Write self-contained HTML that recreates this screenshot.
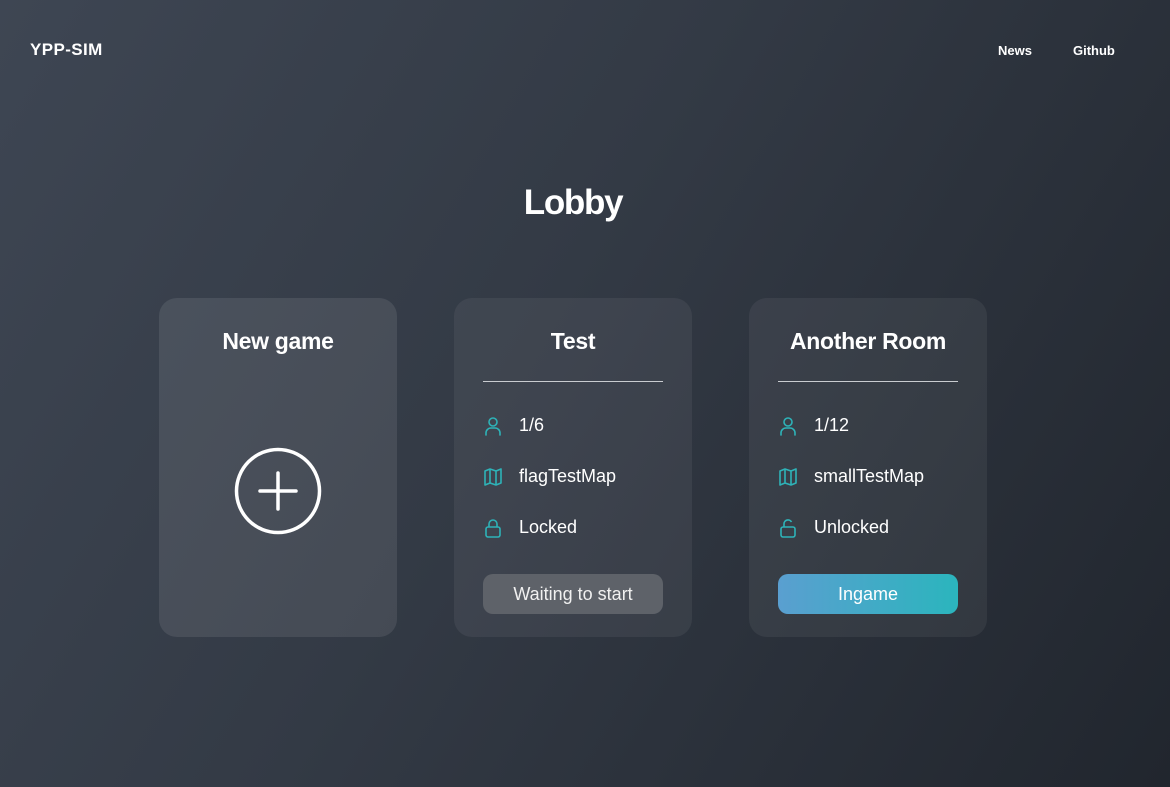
<!DOCTYPE html>
<html><head><style>
html,body{margin:0;width:1170px;height:787px;overflow:hidden}
body{background:linear-gradient(120deg,#3e4653 0%,#333a45 45%,#21262e 100%);font-family:"Liberation Sans",sans-serif;color:#fff;position:relative}
.logo{position:absolute;left:30px;top:40px;font-weight:bold;font-size:17px;letter-spacing:0.4px}
.nav{position:absolute;top:43px;font-weight:bold;font-size:13px}
h1{position:absolute;left:0;width:1146px;text-align:center;top:183px;margin:0;font-size:35px;letter-spacing:-1.3px}
.card{position:absolute;top:298px;width:238px;height:339px;border-radius:18px;background:rgba(255,255,255,0.06)}
.card.new{background:rgba(255,255,255,0.09)}
.title{position:absolute;top:30px;width:100%;text-align:center;font-size:23px;font-weight:bold;letter-spacing:-0.3px}
.hr{position:absolute;left:29px;width:180px;top:83px;border-top:1px solid #c9ccd0}
.row{position:absolute;left:29px;font-size:18px;display:flex;align-items:center}
.row svg{margin-right:16px}
.btn{position:absolute;left:29px;top:276px;width:180px;height:40px;border-radius:10px;text-align:center;line-height:40px;font-size:18px}
</style></head><body>
<div class="logo">YPP-SIM</div>
<div class="nav" style="left:998px">News</div>
<div class="nav" style="left:1073px">Github</div>
<h1>Lobby</h1>
<div class="card new" style="left:159px">
<div class="title">New game</div>
<svg style="position:absolute;left:75px;top:149px" width="88" height="88" viewBox="0 0 88 88" fill="none" stroke="#fff" stroke-width="3.5" stroke-linecap="round"><circle cx="44" cy="44" r="41.5"/><path d="M44 26v36M26 44h36"/></svg>
</div>
<div class="card" style="left:454px">
<div class="title">Test</div><div class="hr"></div>
<div class="row" style="top:117px"><svg width="20" height="20" viewBox="0 0 20 20" fill="none" stroke="#2eb3b8" stroke-width="1.6" stroke-linecap="round"><circle cx="10" cy="6" r="4"/><path d="M3 19v-2a5 5 0 0 1 5-5h4a5 5 0 0 1 5 5v2"/></svg>1/6</div>
<div class="row" style="top:168px"><svg width="20" height="20" viewBox="0 0 20 20" fill="none" stroke="#2eb3b8" stroke-width="1.6" stroke-linejoin="round"><path d="M2 4l5-2 6 2 5-2v14l-5 2-6-2-5 2z M7 2v14 M13 4v14"/></svg>flagTestMap</div>
<div class="row" style="top:219px"><svg width="20" height="20" viewBox="0 0 20 20" fill="none" stroke="#2eb3b8" stroke-width="1.6"><rect x="3" y="9" width="14" height="10" rx="2"/><path d="M6 9V6a4 4 0 0 1 8 0v3"/></svg>Locked</div>
<div class="btn" style="background:#5e6269;color:#f0f0f0">Waiting to start</div>
</div>
<div class="card" style="left:749px">
<div class="title">Another Room</div><div class="hr"></div>
<div class="row" style="top:117px"><svg width="20" height="20" viewBox="0 0 20 20" fill="none" stroke="#2eb3b8" stroke-width="1.6" stroke-linecap="round"><circle cx="10" cy="6" r="4"/><path d="M3 19v-2a5 5 0 0 1 5-5h4a5 5 0 0 1 5 5v2"/></svg>1/12</div>
<div class="row" style="top:168px"><svg width="20" height="20" viewBox="0 0 20 20" fill="none" stroke="#2eb3b8" stroke-width="1.6" stroke-linejoin="round"><path d="M2 4l5-2 6 2 5-2v14l-5 2-6-2-5 2z M7 2v14 M13 4v14"/></svg>smallTestMap</div>
<div class="row" style="top:219px"><svg width="20" height="20" viewBox="0 0 20 20" fill="none" stroke="#2eb3b8" stroke-width="1.6"><rect x="3" y="9" width="14" height="10" rx="2"/><path d="M6 9V6a4 4 0 0 1 7.5-2"/></svg>Unlocked</div>
<div class="btn" style="background:linear-gradient(90deg,#5a9fd0,#2bb5bd)">Ingame</div>
</div>
</body></html>
